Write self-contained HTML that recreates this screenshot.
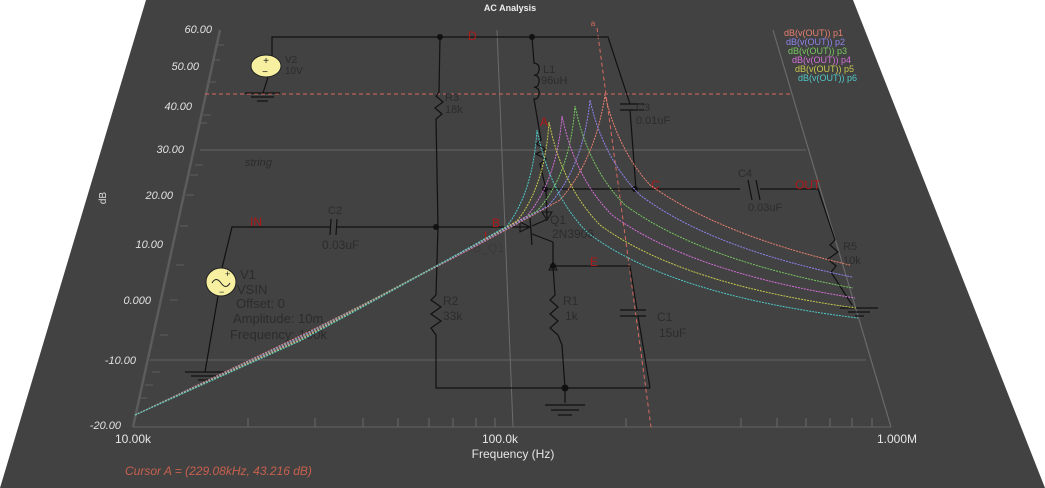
<!DOCTYPE html>
<html><head><meta charset="utf-8"><style>
html,body{margin:0;padding:0;background:#fff;width:1045px;height:488px;overflow:hidden}
svg{display:block;font-family:"Liberation Sans",sans-serif}
</style></head><body>
<svg width="1045" height="488" viewBox="0 0 1045 488" xmlns="http://www.w3.org/2000/svg">
<polygon points="146,0 853,0 1045,488 0,488" fill="#424242"/>
<g stroke="#5e5e5e" stroke-width="1.2" fill="none">
<line x1="200" y1="150" x2="806" y2="150"/>
<line x1="150" y1="360" x2="866" y2="360"/>
<line x1="133" y1="427" x2="891" y2="427"/>
<line x1="773" y1="30" x2="891" y2="427" stroke="#6a6a6a"/>
</g>
<line x1="497" y1="30" x2="513" y2="427" stroke="#6c6c6c" stroke-width="1"/>
<line x1="220" y1="30" x2="133" y2="427" stroke="#5c5c5c" stroke-width="2.5"/>
<g stroke="#5e5e5e" stroke-width="1">
<line x1="216" y1="45" x2="224" y2="45"/><line x1="212" y1="60" x2="220" y2="60"/><line x1="208" y1="82" x2="216" y2="82"/>
<line x1="203" y1="115" x2="211" y2="115"/><line x1="199" y1="123" x2="207" y2="123"/><line x1="195" y1="165" x2="203" y2="165"/>
<line x1="190" y1="175" x2="198" y2="175"/><line x1="186" y1="195" x2="194" y2="195"/><line x1="180" y1="226" x2="188" y2="226"/>
<line x1="176" y1="265" x2="184" y2="265"/><line x1="170" y1="300" x2="178" y2="300"/><line x1="160" y1="335" x2="168" y2="335"/>
<line x1="152" y1="372" x2="160" y2="372"/><line x1="145" y1="385" x2="153" y2="385"/><line x1="139" y1="398" x2="147" y2="398"/>
</g>
<g stroke="#6a6a6a" stroke-width="1">
<line x1="248" y1="427" x2="248" y2="418"/><line x1="315" y1="427" x2="315" y2="418"/><line x1="363" y1="427" x2="363" y2="418"/>
<line x1="398" y1="427" x2="398" y2="418"/><line x1="429" y1="427" x2="429" y2="418"/><line x1="453" y1="427" x2="453" y2="418"/>
<line x1="476" y1="427" x2="476" y2="418"/><line x1="495" y1="427" x2="495" y2="418"/>
<line x1="626" y1="427" x2="626" y2="418"/><line x1="741" y1="427" x2="741" y2="418"/><line x1="777" y1="427" x2="777" y2="418"/>
<line x1="806" y1="427" x2="806" y2="418"/><line x1="830" y1="427" x2="830" y2="418"/><line x1="852" y1="427" x2="852" y2="418"/><line x1="872" y1="427" x2="872" y2="418"/>
</g>
<g fill="#e0e0e0" font-size="11" font-style="italic" text-anchor="end">
<text x="212" y="33">60.00</text><text x="199" y="70">50.00</text><text x="192" y="110">40.00</text>
<text x="184" y="153">30.00</text><text x="173" y="199">20.00</text><text x="163" y="248">10.00</text>
<text x="151" y="304">0.000</text><text x="136" y="364">-10.00</text><text x="121" y="429">-20.00</text>
</g>
<text x="106" y="198" fill="#ddd" font-size="10" transform="rotate(-90 106 198)" text-anchor="middle">dB</text>
<g fill="#e6e6e6" font-size="12" text-anchor="middle">
<text x="133" y="443">10.00k</text><text x="500" y="443">100.0k</text><text x="897" y="443">1.000M</text>
<text x="513" y="458">Frequency (Hz)</text>
</g>
<text x="510" y="11" fill="#eee" font-size="9" font-weight="bold" text-anchor="middle">AC Analysis</text>
<text x="125" y="475" fill="#c8604e" font-size="12" font-style="italic">Cursor A = (229.08kHz, 43.216 dB)</text>
<g font-size="9">
<text x="784" y="36" fill="#e88070">dB(v(OUT)) p1</text>
<text x="786" y="45" fill="#8c84ee">dB(v(OUT)) p2</text>
<text x="788" y="54" fill="#78c860">dB(v(OUT)) p3</text>
<text x="792" y="63" fill="#d470d8">dB(v(OUT)) p4</text>
<text x="795" y="72" fill="#c8c850">dB(v(OUT)) p5</text>
<text x="798" y="81" fill="#50c8c8">dB(v(OUT)) p6</text>
</g>
<g stroke="#d86a60" stroke-width="1" stroke-dasharray="4,3" fill="none">
<line x1="205" y1="94" x2="790" y2="94"/>
<line x1="597" y1="28" x2="651" y2="427"/>
</g>
<text x="593" y="26" fill="#d86a60" font-size="8" text-anchor="middle">a</text>
<g stroke="#111" stroke-width="1.2" fill="none">
<polyline points="272,57 272,37 608,37 630,104"/>
<line x1="630" y1="110" x2="636" y2="189"/>
<line x1="620" y1="104" x2="644" y2="104"/><line x1="620" y1="110" x2="644" y2="110"/>
<line x1="268" y1="77" x2="263" y2="93"/>
<line x1="245" y1="93" x2="280" y2="93"/><line x1="251" y1="97" x2="274" y2="97"/><line x1="257" y1="101" x2="268" y2="101"/>
<polyline points="440,37 439,92 436,96 443,102 435,108 442,114 436,119 438,227 436,295 431,300 441,307 431,314 441,321 431,328 436,335 436,388 650,388"/>
<path d="M532,37 L534,63 q6,1 5,7 q-1,6 -5,5 q6,1 5,7 q-1,6 -5,5 q6,1 5,7 q-1,6 -5,5 L541,140 l-5,4 l10,5 l-10,5 l10,5 l-6,5 L546,189"/>
<polyline points="545,189 740,189"/><line x1="748" y1="180" x2="752" y2="200"/><line x1="756" y1="180" x2="760" y2="200"/>
<polyline points="760,189 818,189 835,240 830,245 838,252 828,259 836,266 831,272 852,305"/>
<line x1="840" y1="308" x2="878" y2="308"/><line x1="848" y1="312" x2="870" y2="312"/><line x1="855" y1="316" x2="864" y2="316"/>
<line x1="546" y1="189" x2="547" y2="218"/>
<line x1="530" y1="218" x2="532" y2="245"/>
<line x1="532" y1="226" x2="548" y2="219"/><line x1="532" y1="234" x2="553" y2="242"/>
<polyline points="553,242 553,266 630,266 637,310"/>
<line x1="620" y1="310" x2="646" y2="310"/><line x1="620" y1="316" x2="646" y2="316"/>
<line x1="638" y1="316" x2="650" y2="388"/>
<polyline points="553,266 555,295 550,300 558,307 550,314 558,321 550,328 558,335 562,345 565,388 565,403"/>
<line x1="545" y1="405" x2="585" y2="405"/><line x1="551" y1="410" x2="579" y2="410"/><line x1="558" y1="415" x2="572" y2="415"/>
<polyline points="205,372 218,296"/><polyline points="222,268 232,227 330,227"/>
<line x1="331" y1="219" x2="330" y2="235"/><line x1="337" y1="219" x2="336" y2="235"/>
<line x1="337" y1="227" x2="530" y2="227"/>
<line x1="185" y1="372" x2="225" y2="372"/><line x1="191" y1="376" x2="219" y2="376"/><line x1="198" y1="380" x2="212" y2="380"/>
</g>
<polygon points="520,222 530,227 520,232" fill="none" stroke="#111"/>
<polygon points="542,212 552,212 547,220" fill="none" stroke="#111"/>
<polygon points="549,270 557,270 553,262" fill="none" stroke="#111"/>
<g fill="#111"><circle cx="440" cy="37" r="3"/><circle cx="532" cy="37" r="3"/><circle cx="545" cy="189" r="3"/><circle cx="635" cy="189" r="3"/><circle cx="436" cy="227" r="3"/><circle cx="553" cy="266" r="3"/><circle cx="565" cy="388" r="3.5"/></g>
<ellipse cx="266" cy="66" rx="15" ry="11" fill="#f6f0a0" stroke="#222"/>
<text x="266" y="64" font-size="10" fill="#222" text-anchor="middle">+</text><text x="265" y="75" font-size="10" fill="#222" text-anchor="middle">−</text>
<ellipse cx="221" cy="282" rx="15" ry="14" fill="#f6f0a0" stroke="#222"/>
<path d="M212,283 q4,-7 9,0 q5,7 9,0" stroke="#222" fill="none"/>
<text x="225" y="277" font-size="9" fill="#222">+</text><text x="219" y="295" font-size="9" fill="#222">−</text>
<g fill="#2c2c2c" font-size="12">
<text x="285" y="63" font-size="10">V2</text><text x="285" y="74" font-size="10">10V</text>
<text x="445" y="101" font-size="11">R3</text><text x="445" y="113" font-size="11">18k</text>
<text x="543" y="73" font-size="11">L1</text><text x="541" y="84" font-size="11">96uH</text>
<text x="636" y="111" font-size="11">C3</text><text x="636" y="124" font-size="11">0.01uF</text>
<text x="738" y="177" font-size="11">C4</text><text x="748" y="211" font-size="11">0.03uF</text>
<text x="843" y="250" font-size="11">R5</text><text x="843" y="264" font-size="11">10k</text>
<text x="550" y="224" font-size="12">Q1</text><text x="552" y="238" font-size="12">2N3906</text>
<text x="563" y="305" font-size="12">R1</text><text x="565" y="320" font-size="12">1k</text>
<text x="443" y="305" font-size="12">R2</text><text x="443" y="320" font-size="12">33k</text>
<text x="657" y="321" font-size="12">C1</text><text x="659" y="337" font-size="12">15uF</text>
<text x="328" y="214" font-size="11">C2</text><text x="322" y="249" font-size="12">0.03uF</text>
<g font-size="13"><text x="240" y="279">V1</text><text x="237" y="294">VSIN</text><text x="236" y="308">Offset: 0</text>
<text x="233" y="323">Amplitude: 10m</text><text x="230" y="339">Frequency: 100k</text></g>
<text x="245" y="166" font-size="11" font-style="italic">string</text>
<text x="470" y="252" font-size="12" fill="#3a3a3a">IB_Q1</text>
</g>
<g fill="#b01818" font-size="12">
<text x="250" y="226">IN</text><text x="468" y="40">D</text><text x="540" y="126">A</text><text x="651" y="189">C</text>
<text x="795" y="189">OUT</text><text x="590" y="266">E</text><text x="492" y="227">B</text><text x="484" y="240">I</text>
</g>
<g fill="none" stroke-width="1" stroke-dasharray="2,1">
<path stroke="#e88070" d="M135,415 L300,336 Q450,262 560,200 Q595,160 605,95 Q618,150 650,185 Q720,235 850,265"/>
<path stroke="#8c84ee" d="M135,415 L300,337 Q440,266 548,206 Q583,168 590,100 Q603,158 640,195 Q710,248 852,277"/>
<path stroke="#78c860" d="M135,415 L300,338 Q430,270 537,211 Q570,175 575,106 Q588,168 625,205 Q700,260 853,288"/>
<path stroke="#d470d8" d="M135,415 L300,339 Q425,273 527,216 Q557,180 562,116 Q575,178 612,215 Q690,272 855,298"/>
<path stroke="#c8c850" d="M135,415 L300,340 Q420,276 517,221 Q545,186 549,122 Q562,186 600,225 Q680,284 856,308"/>
<path stroke="#50c8c8" d="M135,415 L300,341 Q415,279 507,226 Q533,192 537,130 Q550,195 588,233 Q670,295 858,318"/>
</g>
</svg>
</body></html>
